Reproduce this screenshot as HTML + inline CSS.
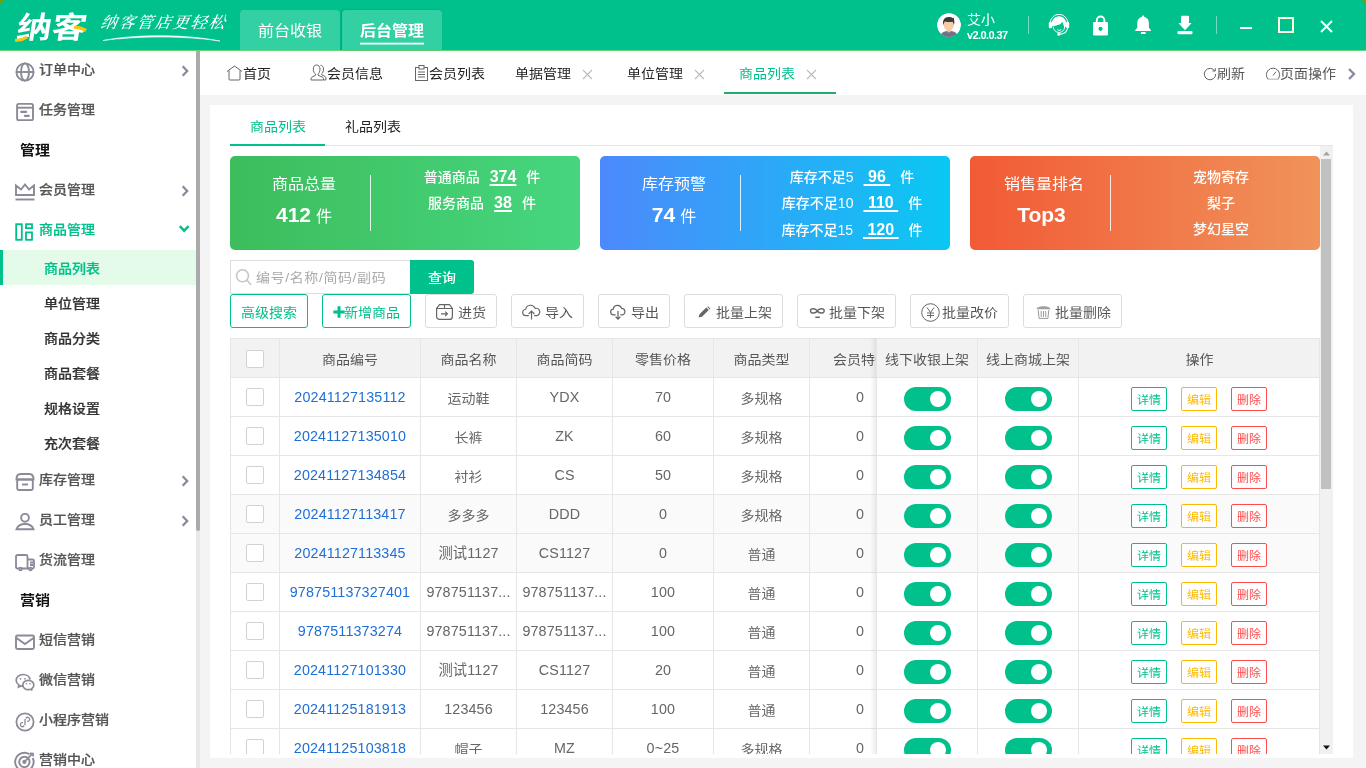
<!DOCTYPE html>
<html lang="zh-CN"><head><meta charset="utf-8"><title>纳客 - 商品列表</title>
<style>
*{box-sizing:border-box;margin:0;padding:0}
html,body{width:1366px;height:768px;overflow:hidden}
body{position:relative;background:#f4f4f4;font-family:"Liberation Sans","Noto Sans CJK SC",sans-serif;font-size:14px;color:#333}
.abs{position:absolute}
#app{position:absolute;left:0;top:0;width:1366px;height:768px;will-change:transform}
#hdr{position:absolute;left:0;top:0;width:1366px;height:51px;background:#00c08b;border-bottom:1px solid #5fd67f}
.logo{position:absolute;left:14px;top:8px;font-size:30px;line-height:40px;font-weight:700;color:#fff;letter-spacing:0;transform:skewX(-9deg) scaleX(1.16);transform-origin:0 100%}
.slogan{position:absolute;left:101px;top:12px;font-family:"Liberation Serif","Noto Serif CJK SC",serif;font-weight:500;font-style:italic;font-size:16px;line-height:22px;letter-spacing:2px;color:#fff;white-space:nowrap;transform:skewX(-10deg)}
.htab{position:absolute;top:10px;height:40px;width:100px;background:#33d0a3;border-radius:4px 4px 0 0;color:#fff;font-size:16px;line-height:42px;text-align:center}
.htab b{font-weight:700;display:inline-block;position:relative;transform:scaleY(.9)}
.htab b:after{content:"";position:absolute;left:0;right:0;bottom:5.800px;height:2.200px;background:#fff}
.uname{position:absolute;left:967px;top:10px;transform:scaleY(.92);font-size:14px;line-height:18px;color:#fff}
.uver{position:absolute;left:967px;top:27px;font-size:11px;line-height:16px;color:#fff;font-weight:700;letter-spacing:-0.6px}
.hsep{position:absolute;top:16px;width:1px;height:18px;background:rgba(255,255,255,.45)}

#side{position:absolute;left:0;top:51px;width:196px;height:717px;background:#fff;overflow:hidden}
#strack{position:absolute;left:196px;top:51px;width:4px;height:717px;background:#e8e8e8}
#sthumb{position:absolute;left:196px;top:51px;width:4px;height:480px;background:#aaa;border-radius:0 0 2px 2px}
.mi{position:absolute;left:0;width:196px;height:40px;line-height:40px;font-weight:500;-webkit-text-stroke:.25px;font-size:14px;color:#555}
.mi span{position:absolute;left:39px;top:0;white-space:nowrap;transform:translateY(-.5px) scaleY(.9)}
.mi svg.ic{position:absolute;left:14px;top:10.500px;width:22px;height:22px}
.mi svg.ch{position:absolute;left:178px;top:12px;width:16px;height:16px}
.mh{position:absolute;left:20px;transform:scaleY(.9);height:40px;line-height:40px;font-weight:700;font-size:15px;color:#111}
.si{position:absolute;left:0;width:196px;height:35px;line-height:37px;font-weight:500;-webkit-text-stroke:.25px;font-size:14px;color:#333}
.si span{position:absolute;left:44px;transform:scaleY(.9)}
.si.on{background:#e5fbe9;color:#00c08b;border-left:3px solid #00c08b}
.si.on span{left:41px}

#tabs{position:absolute;left:200px;top:51px;width:1166px;height:44px;background:#fff}
.tb{position:absolute;top:0;height:44px;transform:scaleY(.9);line-height:46px;font-size:14px;color:#222;white-space:nowrap}
.tb.on{color:#00c08b}
.tx{position:absolute;top:18px;width:11px;height:11px}

#card{position:absolute;left:210px;top:105px;width:1143px;height:653px;background:#fff}
.it{position:absolute;top:0;height:41px;transform:scaleY(.9);line-height:45px;font-size:14px;color:#222}
.stat{position:absolute;top:51px;width:350px;height:94px;border-radius:5px;color:#fff}
.stat .t{position:absolute;font-size:16px;line-height:22px;white-space:nowrap;transform:translateX(-50%) scaleY(.9)}
.stat .n{position:absolute;font-size:16px;line-height:28px;white-space:nowrap;transform:translateX(-50%)}
.stat .n b{font-size:21px;font-weight:700;margin-right:5px}
.stat .sp{position:absolute;left:140px;top:19px;width:1px;height:56px;background:rgba(255,255,255,.85)}
.stat .r{position:absolute;font-size:14px;line-height:20px;white-space:nowrap;transform:translateX(-50%);font-weight:500}
.stat .r u{font-weight:700;font-size:16px;margin:0 10px;text-decoration:underline;text-underline-offset:1.500px;text-decoration-thickness:1.500px;white-space:pre}

.btn{position:absolute;top:189px;height:34px;border:1px solid #ddd;border-radius:3px;background:#fff;color:#555;font-size:14px;line-height:36px;white-space:nowrap}
.btn.g{border-color:#00c08b;color:#00c08b;text-align:center}
.btn span{position:absolute;top:0;transform:scaleY(.9)}
.z{display:inline-block;transform:scaleY(.9)}
.btn svg{position:absolute}

#tbl{position:absolute;left:20px;top:233px;width:1090px;height:416px;overflow:hidden}
.hr{position:absolute;left:0;top:0;width:1090px;height:40px;background:#f2f2f2;border:1px solid #e6e6e6}
.row{position:absolute;left:0;width:1090px;height:39px;border-bottom:1px solid #e6e6e6;background:#fff}
.row.h{background:#fafafa}
.c{position:absolute;top:0;height:100%;border-left:1px solid #e6e6e6;text-align:center;line-height:40px;font-size:14px;color:#666;white-space:nowrap;overflow:hidden}
.hr .c{line-height:40px;color:#555}

.c.n{line-height:39px;font-size:14.300px;letter-spacing:.15px}
.c a{color:#1e6fd6;text-decoration:none;font-size:14.300px;letter-spacing:.15px}
.cb{position:absolute;left:16px;top:10px;width:18px;height:18px;border:1px solid #d2d2d2;border-radius:2px;background:#fff}
.sw{position:absolute;top:9px;width:47px;height:24px;border-radius:12px;background:#00c08b}
.sw:after{content:"";position:absolute;left:26px;top:4px;width:16px;height:16px;border-radius:8px;background:#fff}
.ob b{display:block;font-weight:400;transform:scaleY(.9)}
.ob{position:absolute;top:9px;width:36px;height:24px;border:1px solid;border-radius:2px;font-size:12px;line-height:24px;text-align:center;background:#fff}
</style></head>
<body>
<div id="app">

<div id="hdr">
 <div class="abs" style="left:0;top:0;width:0;height:0;border-top:4px solid #7a9e00;border-right:4px solid transparent"></div><div class="abs" style="right:0;top:0;width:0;height:0;border-top:4px solid #7a9e00;border-left:4px solid transparent"></div>
 <div class="logo">纳客</div>
 <svg class="abs" style="left:13px;top:26px" width="76" height="18" viewBox="0 0 76 18"><path d="M2 14 q6 1 12-3" fill="none" stroke="#f5c518" stroke-width="3"/><path d="M61 1 q5 0 12 3.500" fill="none" stroke="#f5c518" stroke-width="3.500"/></svg>
 <div class="slogan">纳客管店更轻松</div>
 <svg class="abs" style="left:100px;top:33px" width="125" height="10" viewBox="0 0 125 10"><path d="M3 7.500 C35 1 85 1 120 8 C85 2.500 35 3 3 7.500z" fill="#fff" stroke="#fff" stroke-width=".6"/></svg>
 <div class="htab" style="left:240px"><span class="z">前台收银</span></div>
 <div class="htab" style="left:342px;box-shadow:-1px 0 2px rgba(0,0,0,.18)"><b>后台管理</b></div>
 <svg class="abs" style="left:937px;top:13px;border-radius:50%;overflow:hidden" width="24" height="24" viewBox="0 0 24 24"><circle cx="12" cy="12" r="12" fill="#fff"/><g><path d="M3.500 24c0-4.500 3.500-6.100 8.500-6.100s8.500 1.600 8.500 6.100z" fill="#72728a"/><path d="M9.800 15h4.400v3l-2.200 1.800-2.200-1.800z" fill="#f2c09c"/><ellipse cx="11.700" cy="12.300" rx="5.100" ry="5.400" fill="#f7cba6"/><path d="M6.300 12.300c-1.200-5 1.200-8.300 5.400-8.300 2 0 3.300 0.500 4 1.300 0.600-0.500 1.200-0.600 1.500-0.400-0.300 0.500-0.300 1-0.200 1.500 0.500 1.700 0.600 3.500-0.200 5.800-0.300-1.800-0.700-2.800-1.300-3.500-2.500 0.600-5.500 0.500-7.600-0.300-0.800 0.900-1.300 2.200-1.600 3.900z" fill="#3a3a3a"/></g></svg>
 <div class="uname">艾小</div><div class="uver">v2.0.0.37</div>
 <div class="hsep" style="left:1028px"></div>
 <svg class="abs" style="left:1048px;top:14px" width="22" height="22" viewBox="0 0 22 22"><g fill="none" stroke="#fff"><path d="M2.300 9A8.700 8.700 0 0 1 19.700 9" stroke-width="1"/><path d="M5.300 13C5.800 20.300 16.200 20.300 16.700 13" stroke-width=".9"/><path d="M9.400 15.700Q11.300 17.300 13.200 15.700" stroke-width="1"/><path d="M19.600 13.500C19.500 17.500 16 20 11 20.400" stroke-width="1.100"/></g><g fill="#fff"><path d="M3.500 12.600C3.100 6 6.500 2.300 11 2.300C15.500 2.300 18.900 6 18.500 12.600L16.300 13.600L14.400 7.800L12.300 10.200L5.800 12.300Z"/><rect x=".8" y="7.800" width="3.200" height="6.500" rx="1.400"/><rect x="18" y="7.800" width="3.200" height="6.500" rx="1.400"/><circle cx="10.700" cy="20.400" r="1.400"/></g></svg>
 <svg class="abs" style="left:1092px;top:15px" width="18" height="22" viewBox="0 0 18 22"><path d="M4.800 8v-2.700a3.800 3.800 0 0 1 7.600 0v2.700" fill="none" stroke="#fff" stroke-width="1.900"/><rect x="1" y="7" width="15" height="13.500" rx="1.200" fill="#fff"/><circle cx="8.500" cy="13.800" r="2.100" fill="#00c08b"/></svg>
 <svg class="abs" style="left:1134px;top:15px" width="18" height="20" viewBox="0 0 18 20"><path d="M9.200 0.600c-0.800 0-1.200 0.500-1.200 1.200c-3 0.800-4.700 3.200-4.700 6.200v4.500l-2.100 2.800v0.700h15.800v-0.700l-2.100-2.800v-4.500c0-3-1.700-5.400-4.700-6.200c0-0.700-0.400-1.200-1-1.200z" fill="#fff"/><rect x="6.800" y="17" width="5" height="2.100" rx=".9" fill="#fff"/></svg>
 <svg class="abs" style="left:1176px;top:15px" width="18" height="20" viewBox="0 0 18 20"><path d="M6 0.700h6a1 1 0 0 1 1 1v6.300h2.700l-6.700 7.200-6.700-7.200h2.700v-6.300a1 1 0 0 1 1-1z" fill="#fff"/><rect x="1.500" y="16" width="15" height="3.200" rx="1" fill="#fff"/></svg>
 <div class="hsep" style="left:1216px"></div>
 <div class="abs" style="left:1240px;top:27px;width:12px;height:2px;background:#fff"></div>
 <div class="abs" style="left:1278px;top:17px;width:16px;height:16px;border:2px solid #ffffe0"></div>
 <svg class="abs" style="left:1319px;top:19px" width="15" height="15" viewBox="0 0 15 15"><path d="M2 2l11 11M13 2l-11 11" stroke="#fff" stroke-width="2" fill="none"/></svg>
</div>
<div id="side"><div class="mi" style="top:-1px;"><svg class="ic" viewBox="0 0 22 22"><g fill="none" stroke="#8a8a98" stroke-width="1.9"><circle cx="11" cy="11" r="8.6"/><ellipse cx="11" cy="11" rx="4" ry="8.6"/><path d="M2.4 11h17.2"/></g></svg><span>订单中心</span><svg class="ch" viewBox="0 0 16 16"><path d="M4.700 4.200 L9.200 9 L4.700 13.800" fill="none" stroke="#8a8a9c" stroke-width="2.300"/></svg></div><div class="mi" style="top:39px;"><svg class="ic" viewBox="0 0 22 22"><g fill="none" stroke="#8a8a98" stroke-width="1.900"><rect x="3.100" y="2.900" width="15.900" height="16.200" rx="1.600"/><path d="M3.100 6.700h15.900"/><path d="M7.300 10.900h4.800M10.900 14.800h3.900" stroke-width="2.200" stroke-linecap="round"/></g></svg><span>任务管理</span></div><div class="mh" style="top:79px">管理</div><div class="mi" style="top:119px;"><svg class="ic" viewBox="0 0 22 22"><g fill="none" stroke="#8a8a98" stroke-width="1.9"><path d="M2 4.5v9.5h18v-9.5l-5 4-4-5-4 5z"/><path d="M1.5 18.5h19"/></g></svg><span>会员管理</span><svg class="ch" viewBox="0 0 16 16"><path d="M4.700 4.200 L9.200 9 L4.700 13.800" fill="none" stroke="#8a8a9c" stroke-width="2.300"/></svg></div><div class="mi" style="top:159px;color:#00c08b;"><svg class="ic" viewBox="0 0 22 22"><g fill="none" stroke="#00c08b" stroke-width="1.8"><rect x="2.2" y="3.2" width="5.6" height="15.6"/><rect x="12" y="3.2" width="6" height="4"/><rect x="12" y="11.4" width="6" height="7.4"/></g></svg><span>商品管理</span><svg class="ch" viewBox="0 0 16 16"><path d="M1.800 4.200 L6.200 8.700 L10.600 4.200" fill="none" stroke="#00c08b" stroke-width="2.400"/></svg></div><div class="si on" style="top:199px"><span>商品列表</span></div><div class="si" style="top:234px"><span>单位管理</span></div><div class="si" style="top:269px"><span>商品分类</span></div><div class="si" style="top:304px"><span>商品套餐</span></div><div class="si" style="top:339px"><span>规格设置</span></div><div class="si" style="top:374px"><span>充次套餐</span></div><div class="mi" style="top:409px;"><svg class="ic" viewBox="0 0 22 22"><g fill="none" stroke="#8a8a98" stroke-width="1.9"><path d="M2.5 8.5c0-4 2-5.5 4-5.5h9c2 0 4 1.500 4 5.500z"/><rect x="3.200" y="8.5" width="15.6" height="10.5" rx="1.5"/><path d="M8 13.500h6"/></g></svg><span>库存管理</span><svg class="ch" viewBox="0 0 16 16"><path d="M4.700 4.200 L9.200 9 L4.700 13.800" fill="none" stroke="#8a8a9c" stroke-width="2.300"/></svg></div><div class="mi" style="top:449px;"><svg class="ic" viewBox="0 0 22 22"><g fill="none" stroke="#8a8a98" stroke-width="1.9"><circle cx="11" cy="6.800" r="3.900"/><path d="M2.500 18.300c1.500-4.500 4.500-5.300 8.500-5.300s7 0.800 8.500 5.300z"/></g></svg><span>员工管理</span><svg class="ch" viewBox="0 0 16 16"><path d="M4.700 4.200 L9.200 9 L4.700 13.800" fill="none" stroke="#8a8a9c" stroke-width="2.300"/></svg></div><div class="mi" style="top:489px;"><svg class="ic" viewBox="0 0 22 22"><g fill="none" stroke="#8a8a98" stroke-width="1.800"><path d="M5 17.500h-1.500a1.500 1.500 0 0 1-1.500-1.500v-10.500a1.500 1.500 0 0 1 1.500-1.500h8.500a1.500 1.500 0 0 1 1.500 1.500v12h-5.500"/><path d="M13.500 8.500h5a1.500 1.500 0 0 1 1.500 1.500v6a1.500 1.500 0 0 1-1.500 1.500h-0.500M15 17.500h-1.500"/><circle cx="6.500" cy="18" r="1.300"/><circle cx="16.500" cy="18" r="1.300"/><path d="M16 11.500h3M16 14h3"/></g></svg><span>货流管理</span></div><div class="mh" style="top:529px">营销</div><div class="mi" style="top:569px;"><svg class="ic" viewBox="0 0 22 22"><g fill="none" stroke="#8a8a98" stroke-width="1.9"><rect x="2" y="4.500" width="18" height="13.500" rx="1.500"/><path d="M2.500 7l8.500 6 8.500-6"/></g></svg><span>短信营销</span></div><div class="mi" style="top:609px;"><svg class="ic" viewBox="0 0 22 22"><g fill="none" stroke="#8a8a98" stroke-width="1.700"><path d="M9 15.200c-0.800 0-1.500-0.100-2.200-0.300l-2.300 1.100 0.400-2.100c-1.700-1.100-2.700-2.700-2.700-4.500 0-3.300 3.100-5.900 7-5.900 3.500 0 6.400 2.100 6.900 5"/><ellipse cx="14.300" cy="14" rx="5.500" ry="4.700"/><path d="M17 18l1.300 1.500"/></g><g fill="#8a8a98"><circle cx="6.500" cy="7.800" r="0.900"/><circle cx="11" cy="7.800" r="0.900"/><circle cx="12.500" cy="12.800" r="0.800"/><circle cx="16" cy="12.800" r="0.800"/></g></svg><span>微信营销</span></div><div class="mi" style="top:649px;"><svg class="ic" viewBox="0 0 22 22"><g fill="none" stroke="#8a8a98" stroke-width="1.800"><circle cx="11" cy="11" r="8.600"/><path d="M11.800 7.500a2 2 0 1 1 2 2.800h-0.800M10.200 14.500a2 2 0 1 1-2-2.800h0.800M11 8v6" stroke-width="1.300"/></g></svg><span>小程序营销</span></div><div class="mi" style="top:689px;"><svg class="ic" viewBox="0 0 22 22"><g fill="none" stroke="#8a8a98" stroke-width="1.900"><path d="M15.500 3.300A9.200 9.200 0 1 0 18.700 7"/><circle cx="10.400" cy="10.900" r="5.200"/><circle cx="10.400" cy="10.900" r="1.100" fill="#8a8a98"/><path d="M10.400 10.900l8.300-8.600M16 2.300l3 .2.200 3" stroke-width="1.700"/></g></svg><span>营销中心</span></div></div>
<div id="strack"></div><div id="sthumb"></div>

<div id="tabs">
 <svg class="abs" style="left:26px;top:14px" width="17" height="16" viewBox="0 0 17 16"><path d="M1 6.500l7.500-5.500 7.500 5.500M3 5.500v8.500a1 1 0 0 0 1 1h9a1 1 0 0 0 1-1v-8.500" fill="none" stroke="#666" stroke-width="1"/></svg>
 <div class="tb" style="left:43px">首页</div>
 <svg class="abs" style="left:110px;top:13px" width="17" height="18" viewBox="0 0 17 18"><g fill="none" stroke="#666" stroke-width="1"><path d="M6.500 1c2 0 3.500 1.500 3.500 4s-1 4.500-2 5v1.200l4.500 2c0.700 0.300 1 0.800 1 1.500v1.300h-12.500v-1.300c0-0.700 0.300-1.200 1-1.500l3.500-2v-1.200c-1-0.500-2.200-2.500-2.200-5s1.200-4 3.200-4z"/><path d="M10.500 1.200c1.800 0.200 3 1.600 3 3.800 0 2.400-0.800 4.200-1.800 4.800v1l3.300 1.700c0.600 0.300 0.900 0.800 0.900 1.400v2.100h-2"/></g></svg>
 <div class="tb" style="left:127px">会员信息</div>
 <svg class="abs" style="left:215px;top:14px" width="13" height="16" viewBox="0 0 13 16"><g fill="none" stroke="#666" stroke-width="1"><rect x=".5" y="2.500" width="12" height="13"/><rect x="4" y=".5" width="5" height="3.500" fill="#fff"/><path d="M3 7h7M3 9.500h7M3 12h7"/></g></svg>
 <div class="tb" style="left:229px">会员列表</div>
 <div class="tb" style="left:315px">单据管理</div><svg class="tx" style="left:382px" viewBox="0 0 11 11"><path d="M1 1l9 9M10 1l-9 9" stroke="#bbb" stroke-width="1.100" fill="none"/></svg>
 <div class="tb" style="left:427px">单位管理</div><svg class="tx" style="left:494px" viewBox="0 0 11 11"><path d="M1 1l9 9M10 1l-9 9" stroke="#bbb" stroke-width="1.100" fill="none"/></svg>
 <div class="tb on" style="left:539px">商品列表</div><svg class="tx" style="left:606px" viewBox="0 0 11 11"><path d="M1 1l9 9M10 1l-9 9" stroke="#bbb" stroke-width="1.100" fill="none"/></svg>
 <div class="abs" style="left:524px;top:41px;width:112px;height:2px;background:#1fae6a"></div>
 <svg class="abs" style="left:1003px;top:15.500px" width="14" height="14" viewBox="0 0 14 14"><path d="M11.800 4a5.700 5.700 0 1 0 0.900 3" fill="none" stroke="#666" stroke-width="1"/><path d="M9.500 4h2.800v-2.800" fill="none" stroke="#666" stroke-width="1"/></svg>
 <div class="tb" style="left:1017px;color:#555">刷新</div>
 <svg class="abs" style="left:1066px;top:16px" width="14" height="14" viewBox="0 0 14 14"><path d="M1.900 12A6.600 6.600 0 1 1 12.100 12" fill="none" stroke="#666" stroke-width="1"/><path d="M1.500 12.200h11" stroke="#bbb" stroke-width="1.200"/><path d="M7 8.500l3-3.800" stroke="#666" stroke-width="1"/></svg>
 <div class="tb" style="left:1080px;color:#555">页面操作</div>
 <svg class="abs" style="left:1144.500px;top:14.500px" width="14" height="16" viewBox="0 0 14 16"><path d="M4 3l5 5-5 5" fill="none" stroke="#8a8a9c" stroke-width="2.300"/></svg>
</div>

<div id="card">
 <div class="it" style="left:40px;color:#00c08b">商品列表</div>
 <div class="it" style="left:135px">礼品列表</div>
 <div class="abs" style="left:20px;top:40px;width:1103px;height:1px;background:#e6e6e6"></div>
 <div class="abs" style="left:20px;top:39px;width:95px;height:2px;background:#00c08b"></div>
 <div class="stat" style="left:20px;background:linear-gradient(90deg,#3dbd5c,#46d67f)"><div class="t" style="left:74px;top:17px">商品总量</div><div class="n" style="left:74px;top:45px"><b>412</b>件</div><div class="sp"></div><div class="r" style="left:252px;top:10.5px">普通商品<u>374</u>件</div><div class="r" style="left:252px;top:37.0px">服务商品<u>38</u>件</div></div><div class="stat" style="left:390px;background:linear-gradient(90deg,#4d89fc,#0ac8f2)"><div class="t" style="left:74px;top:17px">库存预警</div><div class="n" style="left:74px;top:45px"><b>74</b>件</div><div class="sp"></div><div class="r" style="left:252px;top:10.5px">库存不足5<u>&nbsp;96&nbsp;</u>件</div><div class="r" style="left:252px;top:37.1px">库存不足10<u>&nbsp;110&nbsp;</u>件</div><div class="r" style="left:252px;top:63.7px">库存不足15<u>&nbsp;120&nbsp;</u>件</div></div><div class="stat" style="left:760px;background:linear-gradient(90deg,#f25a35,#f0935b)"><div class="t" style="left:74px;top:17px">销售量排名</div><div class="n" style="left:74px;top:45px"><b>Top3</b></div><div class="sp"></div><div class="r" style="left:251px;top:11px">宠物寄存</div><div class="r" style="left:251px;top:37px">梨子</div><div class="r" style="left:251px;top:63px">梦幻星空</div></div>
 
<div class="abs" style="left:20px;top:155px;width:180px;height:34px;border:1px solid #ddd;border-right:0;background:#fff">
 <svg class="abs" style="left:4px;top:7px" width="18" height="18" viewBox="0 0 18 18"><circle cx="7.500" cy="7.800" r="6" fill="none" stroke="#c6c6c6" stroke-width="1.600"/><path d="M12 12.300l4 4.500" stroke="#c6c6c6" stroke-width="1.600"/></svg>
 <div class="abs" style="left:25px;top:0;line-height:32px;font-size:14px;color:#a9a9a9;letter-spacing:.6px;transform:scaleY(.9)">编号/名称/简码/副码</div>
</div>
<div class="abs" style="left:200px;top:155px;width:64px;height:34px;background:#00c08b;border-radius:0 3px 3px 0;color:#fff;text-align:center;line-height:36px;font-size:14px;font-weight:500"><span class="z">查询</span></div>
<div class="btn g" style="left:20px;width:78px"><i class="z" style="font-style:normal">高级搜索</i></div>
<div class="btn g" style="left:112px;width:89px"><svg style="left:10px;top:11px" width="12" height="12" viewBox="0 0 12 12"><path d="M6 0.300v11.400M.3 6h11.400" stroke="#00c08b" stroke-width="3"/></svg><span style="left:21px">新增商品</span></div>
<div class="btn " style="left:215px;width:72px"><svg style="left:10px;top:9px" width="17" height="16" viewBox="0 0 17 16"><g fill="none" stroke="#666" stroke-width="1.200"><path d="M3.500 .6h10l2.900 3.900v7.900a3 3 0 0 1-3 3h-9.800a3 3 0 0 1-3-3v-7.900z"/><path d="M.6 4.500h15.800M8.500 .6v3.900M5 9.800h6.300M9.200 7.600l2.200 2.200-2.200 2.200"/></g></svg><span style="left:32px">进货</span></div><div class="btn " style="left:301px;width:73px"><svg style="left:9.500px;top:8.500px" width="19" height="16" viewBox="0 0 21 17"><g fill="none" stroke="#666" stroke-width="1.300"><path d="M7.500 12.500h-3a3.500 3.500 0 0 1-0.500-7 5.500 5.500 0 0 1 10.500-1 4 4 0 0 1 2 8h-3"/><path d="M10.500 16.800v-9M7.300 10.700l3.200-3.200 3.200 3.200"/></g></svg><span style="left:33px">导入</span></div><div class="btn " style="left:388px;width:72px"><svg style="left:10.500px;top:9px" width="16" height="16" viewBox="0 0 17 17"><g fill="none" stroke="#666" stroke-width="1.300"><path d="M6 11.500h-2a3 3 0 0 1-0.500-6 4.500 4.500 0 0 1 8.800-0.800 3.500 3.500 0 0 1 1.200 6.800h-2.500"/><path d="M8.500 7.500v8.500M6 13.500l2.500 2.500 2.500-2.500"/></g></svg><span style="left:32px">导出</span></div><div class="btn " style="left:474px;width:99px"><svg style="left:12.500px;top:11px" width="13" height="12" viewBox="0 0 13 12"><path d="M.6 11.600l.9-3.300 6.800-6.800 2.500 2.500-6.800 6.800z M9.200 .8l.8-.6 2.500 2.500-.7.800z" fill="#666"/></svg><span style="left:31px">批量上架</span></div><div class="btn " style="left:587px;width:99px"><svg style="left:11px;top:12px" width="17" height="12" viewBox="0 0 17 12"><g fill="none" stroke="#666" stroke-width="1.500"><path d="M8.300 4C6.800 1.300 1.500 .6 1.500 3.800C1.500 7 6.800 6.500 8.300 4C9.800 1.300 15.200 .6 15.200 3.800C15.200 7 9.800 6.500 8.300 4"/><path d="M6.300 10.300h4.500"/></g></svg><span style="left:31px">批量下架</span></div><div class="btn " style="left:700px;width:99px"><svg style="left:10px;top:8px" width="19" height="19" viewBox="0 0 19 19"><g fill="none" stroke="#666" stroke-width="1"><circle cx="9.500" cy="9.500" r="8.800"/><path d="M6 4.500l3.500 5 3.500-5M9.500 9.500v5.500M6 10h7M6 12.500h7"/></g></svg><span style="left:31px">批量改价</span></div><div class="btn " style="left:813px;width:99px"><svg style="left:12px;top:11px" width="15" height="13" viewBox="0 0 15 13"><path d="M.5 3.200C.5 1.500 3.500 .3 7.500 .3s7 1.200 7 2.900z" fill="#a0a0a0"/><g fill="none" stroke="#999" stroke-width="1"><path d="M2.200 4l.9 8.400h8.800l.9-8.400M5.200 5v6M7.500 5v6M9.800 5v6"/></g></svg><span style="left:31px">批量删除</span></div>
 <div id="tbl"><div class="hr"><div class="c" style="left:0px;width:49px;border-left:0;"><i class="cb" style="top:11px;left:15px"></i></div><div class="c" style="left:48px;width:141px;"><span class="z">商品编号</span></div><div class="c" style="left:189px;width:96px;"><span class="z">商品名称</span></div><div class="c" style="left:285px;width:96px;"><span class="z">商品简码</span></div><div class="c" style="left:381px;width:101px;"><span class="z">零售价格</span></div><div class="c" style="left:482px;width:96px;"><span class="z">商品类型</span></div><div class="c" style="left:578px;width:67px;text-align:left;padding-left:23px;"><span class="z">会员特价</span></div><div class="c" style="left:645px;width:101px"><span class="z">线下收银上架</span></div><div class="c" style="left:746px;width:101px"><span class="z">线上商城上架</span></div><div class="c" style="left:847px;width:242px"><span class="z">操作</span></div></div><div class="row" style="top:40px;border-left:1px solid #e6e6e6;border-right:1px solid #e6e6e6"><div class="c" style="left:-1px;width:49px;border-left:0"><i class="cb"></i></div><div class="c n" style="left:48px;width:141px"><a>20241127135112</a></div><div class="c" style="left:189px;width:96px"><span class="z">运动鞋</span></div><div class="c n" style="left:285px;width:96px">YDX</div><div class="c n" style="left:381px;width:101px">70</div><div class="c" style="left:482px;width:96px"><span class="z">多规格</span></div><div class="c n" style="left:578px;width:67px;text-align:left;padding-left:46px">0</div><div class="c" style="left:645px;width:101px;background:#fff"><i class="sw" style="left:27px"></i></div><div class="c" style="left:746px;width:101px"><i class="sw" style="left:27px"></i></div><div class="c" style="left:847px;width:242px"><span class="ob" style="left:52px;border-color:#00c08b;color:#00c08b"><b>详情</b></span><span class="ob" style="left:102px;border-color:#ffb800;color:#ffb800"><b>编辑</b></span><span class="ob" style="left:152px;border-color:#ff4d4d;color:#ff4d4d"><b>删除</b></span></div></div><div class="row" style="top:79px;border-left:1px solid #e6e6e6;border-right:1px solid #e6e6e6"><div class="c" style="left:-1px;width:49px;border-left:0"><i class="cb"></i></div><div class="c n" style="left:48px;width:141px"><a>20241127135010</a></div><div class="c" style="left:189px;width:96px"><span class="z">长裤</span></div><div class="c n" style="left:285px;width:96px">ZK</div><div class="c n" style="left:381px;width:101px">60</div><div class="c" style="left:482px;width:96px"><span class="z">多规格</span></div><div class="c n" style="left:578px;width:67px;text-align:left;padding-left:46px">0</div><div class="c" style="left:645px;width:101px;background:#fff"><i class="sw" style="left:27px"></i></div><div class="c" style="left:746px;width:101px"><i class="sw" style="left:27px"></i></div><div class="c" style="left:847px;width:242px"><span class="ob" style="left:52px;border-color:#00c08b;color:#00c08b"><b>详情</b></span><span class="ob" style="left:102px;border-color:#ffb800;color:#ffb800"><b>编辑</b></span><span class="ob" style="left:152px;border-color:#ff4d4d;color:#ff4d4d"><b>删除</b></span></div></div><div class="row" style="top:118px;border-left:1px solid #e6e6e6;border-right:1px solid #e6e6e6"><div class="c" style="left:-1px;width:49px;border-left:0"><i class="cb"></i></div><div class="c n" style="left:48px;width:141px"><a>20241127134854</a></div><div class="c" style="left:189px;width:96px"><span class="z">衬衫</span></div><div class="c n" style="left:285px;width:96px">CS</div><div class="c n" style="left:381px;width:101px">50</div><div class="c" style="left:482px;width:96px"><span class="z">多规格</span></div><div class="c n" style="left:578px;width:67px;text-align:left;padding-left:46px">0</div><div class="c" style="left:645px;width:101px;background:#fff"><i class="sw" style="left:27px"></i></div><div class="c" style="left:746px;width:101px"><i class="sw" style="left:27px"></i></div><div class="c" style="left:847px;width:242px"><span class="ob" style="left:52px;border-color:#00c08b;color:#00c08b"><b>详情</b></span><span class="ob" style="left:102px;border-color:#ffb800;color:#ffb800"><b>编辑</b></span><span class="ob" style="left:152px;border-color:#ff4d4d;color:#ff4d4d"><b>删除</b></span></div></div><div class="row h" style="top:157px;border-left:1px solid #e6e6e6;border-right:1px solid #e6e6e6"><div class="c" style="left:-1px;width:49px;border-left:0"><i class="cb"></i></div><div class="c n" style="left:48px;width:141px"><a>20241127113417</a></div><div class="c" style="left:189px;width:96px"><span class="z">多多多</span></div><div class="c n" style="left:285px;width:96px">DDD</div><div class="c n" style="left:381px;width:101px">0</div><div class="c" style="left:482px;width:96px"><span class="z">多规格</span></div><div class="c n" style="left:578px;width:67px;text-align:left;padding-left:46px">0</div><div class="c" style="left:645px;width:101px;background:#fafafa"><i class="sw" style="left:27px"></i></div><div class="c" style="left:746px;width:101px"><i class="sw" style="left:27px"></i></div><div class="c" style="left:847px;width:242px"><span class="ob" style="left:52px;border-color:#00c08b;color:#00c08b"><b>详情</b></span><span class="ob" style="left:102px;border-color:#ffb800;color:#ffb800"><b>编辑</b></span><span class="ob" style="left:152px;border-color:#ff4d4d;color:#ff4d4d"><b>删除</b></span></div></div><div class="row h" style="top:196px;border-left:1px solid #e6e6e6;border-right:1px solid #e6e6e6"><div class="c" style="left:-1px;width:49px;border-left:0"><i class="cb"></i></div><div class="c n" style="left:48px;width:141px"><a>20241127113345</a></div><div class="c n" style="left:189px;width:96px">测试1127</div><div class="c n" style="left:285px;width:96px">CS1127</div><div class="c n" style="left:381px;width:101px">0</div><div class="c" style="left:482px;width:96px"><span class="z">普通</span></div><div class="c n" style="left:578px;width:67px;text-align:left;padding-left:46px">0</div><div class="c" style="left:645px;width:101px;background:#fafafa"><i class="sw" style="left:27px"></i></div><div class="c" style="left:746px;width:101px"><i class="sw" style="left:27px"></i></div><div class="c" style="left:847px;width:242px"><span class="ob" style="left:52px;border-color:#00c08b;color:#00c08b"><b>详情</b></span><span class="ob" style="left:102px;border-color:#ffb800;color:#ffb800"><b>编辑</b></span><span class="ob" style="left:152px;border-color:#ff4d4d;color:#ff4d4d"><b>删除</b></span></div></div><div class="row" style="top:235px;border-left:1px solid #e6e6e6;border-right:1px solid #e6e6e6"><div class="c" style="left:-1px;width:49px;border-left:0"><i class="cb"></i></div><div class="c n" style="left:48px;width:141px"><a>978751137327401</a></div><div class="c n" style="left:189px;width:96px">978751137...</div><div class="c n" style="left:285px;width:96px">978751137...</div><div class="c n" style="left:381px;width:101px">100</div><div class="c" style="left:482px;width:96px"><span class="z">普通</span></div><div class="c n" style="left:578px;width:67px;text-align:left;padding-left:46px">0</div><div class="c" style="left:645px;width:101px;background:#fff"><i class="sw" style="left:27px"></i></div><div class="c" style="left:746px;width:101px"><i class="sw" style="left:27px"></i></div><div class="c" style="left:847px;width:242px"><span class="ob" style="left:52px;border-color:#00c08b;color:#00c08b"><b>详情</b></span><span class="ob" style="left:102px;border-color:#ffb800;color:#ffb800"><b>编辑</b></span><span class="ob" style="left:152px;border-color:#ff4d4d;color:#ff4d4d"><b>删除</b></span></div></div><div class="row" style="top:274px;border-left:1px solid #e6e6e6;border-right:1px solid #e6e6e6"><div class="c" style="left:-1px;width:49px;border-left:0"><i class="cb"></i></div><div class="c n" style="left:48px;width:141px"><a>9787511373274</a></div><div class="c n" style="left:189px;width:96px">978751137...</div><div class="c n" style="left:285px;width:96px">978751137...</div><div class="c n" style="left:381px;width:101px">100</div><div class="c" style="left:482px;width:96px"><span class="z">普通</span></div><div class="c n" style="left:578px;width:67px;text-align:left;padding-left:46px">0</div><div class="c" style="left:645px;width:101px;background:#fff"><i class="sw" style="left:27px"></i></div><div class="c" style="left:746px;width:101px"><i class="sw" style="left:27px"></i></div><div class="c" style="left:847px;width:242px"><span class="ob" style="left:52px;border-color:#00c08b;color:#00c08b"><b>详情</b></span><span class="ob" style="left:102px;border-color:#ffb800;color:#ffb800"><b>编辑</b></span><span class="ob" style="left:152px;border-color:#ff4d4d;color:#ff4d4d"><b>删除</b></span></div></div><div class="row" style="top:313px;border-left:1px solid #e6e6e6;border-right:1px solid #e6e6e6"><div class="c" style="left:-1px;width:49px;border-left:0"><i class="cb"></i></div><div class="c n" style="left:48px;width:141px"><a>20241127101330</a></div><div class="c n" style="left:189px;width:96px">测试1127</div><div class="c n" style="left:285px;width:96px">CS1127</div><div class="c n" style="left:381px;width:101px">20</div><div class="c" style="left:482px;width:96px"><span class="z">普通</span></div><div class="c n" style="left:578px;width:67px;text-align:left;padding-left:46px">0</div><div class="c" style="left:645px;width:101px;background:#fff"><i class="sw" style="left:27px"></i></div><div class="c" style="left:746px;width:101px"><i class="sw" style="left:27px"></i></div><div class="c" style="left:847px;width:242px"><span class="ob" style="left:52px;border-color:#00c08b;color:#00c08b"><b>详情</b></span><span class="ob" style="left:102px;border-color:#ffb800;color:#ffb800"><b>编辑</b></span><span class="ob" style="left:152px;border-color:#ff4d4d;color:#ff4d4d"><b>删除</b></span></div></div><div class="row" style="top:352px;border-left:1px solid #e6e6e6;border-right:1px solid #e6e6e6"><div class="c" style="left:-1px;width:49px;border-left:0"><i class="cb"></i></div><div class="c n" style="left:48px;width:141px"><a>20241125181913</a></div><div class="c n" style="left:189px;width:96px">123456</div><div class="c n" style="left:285px;width:96px">123456</div><div class="c n" style="left:381px;width:101px">100</div><div class="c" style="left:482px;width:96px"><span class="z">普通</span></div><div class="c n" style="left:578px;width:67px;text-align:left;padding-left:46px">0</div><div class="c" style="left:645px;width:101px;background:#fff"><i class="sw" style="left:27px"></i></div><div class="c" style="left:746px;width:101px"><i class="sw" style="left:27px"></i></div><div class="c" style="left:847px;width:242px"><span class="ob" style="left:52px;border-color:#00c08b;color:#00c08b"><b>详情</b></span><span class="ob" style="left:102px;border-color:#ffb800;color:#ffb800"><b>编辑</b></span><span class="ob" style="left:152px;border-color:#ff4d4d;color:#ff4d4d"><b>删除</b></span></div></div><div class="row" style="top:391px;border-left:1px solid #e6e6e6;border-right:1px solid #e6e6e6"><div class="c" style="left:-1px;width:49px;border-left:0"><i class="cb"></i></div><div class="c n" style="left:48px;width:141px"><a>20241125103818</a></div><div class="c" style="left:189px;width:96px"><span class="z">帽子</span></div><div class="c n" style="left:285px;width:96px">MZ</div><div class="c n" style="left:381px;width:101px">0~25</div><div class="c" style="left:482px;width:96px"><span class="z">多规格</span></div><div class="c n" style="left:578px;width:67px;text-align:left;padding-left:46px">0</div><div class="c" style="left:645px;width:101px;background:#fff"><i class="sw" style="left:27px"></i></div><div class="c" style="left:746px;width:101px"><i class="sw" style="left:27px"></i></div><div class="c" style="left:847px;width:242px"><span class="ob" style="left:52px;border-color:#00c08b;color:#00c08b"><b>详情</b></span><span class="ob" style="left:102px;border-color:#ffb800;color:#ffb800"><b>编辑</b></span><span class="ob" style="left:152px;border-color:#ff4d4d;color:#ff4d4d"><b>删除</b></span></div></div><div class="abs" style="left:640px;top:0;width:6px;height:416px;background:linear-gradient(90deg,rgba(0,0,0,0),rgba(0,0,0,.07))"></div></div>
 <div class="abs" style="left:1110px;top:41px;width:13px;height:608px;background:#f1f1f1"></div>
 <div class="abs" style="left:1111px;top:54px;width:10px;height:330px;background:#c1c1c1"></div>
 <svg class="abs" style="left:1110px;top:41px" width="13" height="13" viewBox="0 0 13 13"><path d="M3 9.500l3.500-4 3.500 4z" fill="#a3a3a3"/></svg>
 <svg class="abs" style="left:1110px;top:636px" width="13" height="13" viewBox="0 0 13 13"><path d="M3 4.500l3.500 4 3.500-4z" fill="#111"/></svg>
</div>
</div>
</body></html>
